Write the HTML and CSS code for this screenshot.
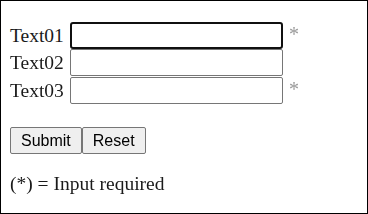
FILE: index.html
```html
<!DOCTYPE html>
<html lang="en">
<head>
  <meta charset="UTF-8" />
  <title>Input form</title>
  <link rel="stylesheet" href="styles.css">
</head>
<body>
  <form class="frame">
    <div class="row">
      <label for="text01">Text01</label>
      <input type="text" id="text01" class="field active" autofocus />
      <span class="req">*</span>
    </div>
    <div class="row">
      <label for="text02">Text02</label>
      <input type="text" id="text02" class="field" />
    </div>
    <div class="row last">
      <label for="text03">Text03</label>
      <input type="text" id="text03" class="field" />
      <span class="req">*</span>
    </div>
    <div class="buttons">
      <button type="submit">Submit</button><button type="reset">Reset</button>
    </div>
    <p class="note">(*) = Input required</p>
  </form>
</body>
</html>
```

FILE: styles.css
```css
html, body { margin: 0; padding: 0; background: #fff; }
body { font-family: "Liberation Serif", "Times New Roman", serif; font-size: 19.5px; color: #1a1a1a; }
.frame { box-sizing: border-box; width: 368px; height: 214px; border: 1px solid #000; padding: 21px 9px 0 9px; }
.row { display: flex; align-items: center; height: 27px; }
.row.last { margin-top: 1px; }
.row label { width: 60px; }
.field { box-sizing: border-box; width: 213px; height: 27px; margin: 0; padding: 1px 6px; border: 1px solid #767676; border-radius: 2px; font-size: 14px; font-family: "Liberation Sans", Arial, sans-serif; background: #fff; }
.field:focus { outline: none; }
.field.active { border: 2px solid #101010; border-radius: 3px; }
.req { margin-left: 6px; color: #999; font-size: 20px; align-self: flex-start; margin-top: 1px; }
.buttons { display: flex; margin-top: 23px; }
.buttons button { box-sizing: border-box; height: 27px; margin: 0; padding: 0 10px; font-family: "Liberation Sans", Arial, sans-serif; font-size: 16px; color: #000; background: #efefef; border: 1px solid #767676; border-radius: 2px; }
.note { margin: 18px 0 0 0; line-height: 23px; }
```
